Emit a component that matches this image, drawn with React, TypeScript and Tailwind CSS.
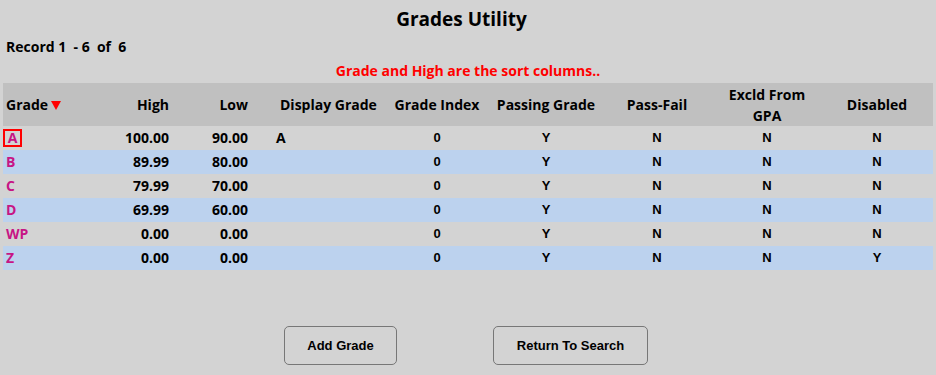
import React from 'react'

interface GradeRow {
  grade: string
  high: string
  low: string
  display: string
  index: string
  passing: string
  passFail: string
  excld: string
  disabled: string
}

const rows: GradeRow[] = [
  { grade: 'A', high: '100.00', low: '90.00', display: 'A', index: '0', passing: 'Y', passFail: 'N', excld: 'N', disabled: 'N' },
  { grade: 'B', high: '89.99', low: '80.00', display: '', index: '0', passing: 'Y', passFail: 'N', excld: 'N', disabled: 'N' },
  { grade: 'C', high: '79.99', low: '70.00', display: '', index: '0', passing: 'Y', passFail: 'N', excld: 'N', disabled: 'N' },
  { grade: 'D', high: '69.99', low: '60.00', display: '', index: '0', passing: 'Y', passFail: 'N', excld: 'N', disabled: 'N' },
  { grade: 'WP', high: '0.00', low: '0.00', display: '', index: '0', passing: 'Y', passFail: 'N', excld: 'N', disabled: 'N' },
  { grade: 'Z', high: '0.00', low: '0.00', display: '', index: '0', passing: 'Y', passFail: 'N', excld: 'N', disabled: 'Y' },
]

const cols = 'grid grid-cols-[97px_72px_79px_132px_108px_110px_112px_108px_112px]'
const geo = "font-['Open_Sans','Noto_Sans',sans-serif]"
const arial = "font-['Liberation_Sans',Arial,sans-serif]"

const App: React.FC = () => {
  return (
    <div className={`min-h-screen bg-[#d3d3d3] text-black ${geo}`}>
      <h1 className="pt-[6px] pr-[13px] text-center text-[19px] font-bold leading-[26px]">Grades Utility</h1>
      <div className="mt-[7px] pl-[6px] text-[14px] font-bold leading-[16px] whitespace-pre">Record 1  - 6  of  6</div>
      <div className="mt-[8px] text-center text-[14px] font-bold leading-[16px] text-[#ff0000]">Grade and High are the sort columns..</div>

      <div className="mx-[3px] mt-[4px] text-[14px] font-bold">
        <div className={`${cols} h-[43px] items-center bg-[#c0c0c0] leading-[21px]`}>
          <div className="flex items-center pl-[3px]">
            Grade
            <svg width="10" height="9" viewBox="0 0 10 9" className="ml-[3px] mt-[2px]">
              <path d="M0 0 H10 L5 9 Z" fill="#ff0000" />
            </svg>
          </div>
          <div className="pr-[3px] text-right">High</div>
          <div className="pr-[3px] text-right">Low</div>
          <div className="pl-[29px]">Display Grade</div>
          <div className="text-center">Grade Index</div>
          <div className="text-center">Passing Grade</div>
          <div className="text-center">Pass-Fail</div>
          <div className="text-center">Excld From<br />GPA</div>
          <div className="text-center">Disabled</div>
        </div>
        {rows.map((r, i) => (
          <div key={r.grade} className={`${cols} h-[24px] items-center leading-[16px] ${i % 2 ? 'bg-[#bcd2ee]' : 'bg-[#d3d3d3]'}`}>
            <div className="pl-[3px]">
              {i === 0 ? (
                <span className="ml-[-3px] inline-flex h-[18px] w-[19px] items-center justify-center border-2 border-[#ff0000] text-[#c71585]">{r.grade}</span>
              ) : (
                <span className="text-[#c71585]">{r.grade}</span>
              )}
            </div>
            <div className="pr-[3px] text-right">{r.high}</div>
            <div className="pr-[3px] text-right">{r.low}</div>
            <div className="pl-[25px]">{r.display}</div>
            <div className={`text-center text-[13px] ${arial}`}>{r.index}</div>
            <div className={`text-center text-[13px] ${arial}`}>{r.passing}</div>
            <div className={`text-center text-[13px] ${arial}`}>{r.passFail}</div>
            <div className={`text-center text-[13px] ${arial}`}>{r.excld}</div>
            <div className={`text-center text-[13px] ${arial}`}>{r.disabled}</div>
          </div>
        ))}
      </div>

      <div className={`mt-[56px] flex justify-center gap-[96px] pr-[4px] ${arial}`}>
        <button className="h-[39px] w-[113px] rounded-[5px] border border-[#777777] text-[13px] font-bold">Add Grade</button>
        <button className="h-[39px] w-[155px] rounded-[5px] border border-[#777777] text-[13px] font-bold">Return To Search</button>
      </div>
    </div>
  )
}

export default App
